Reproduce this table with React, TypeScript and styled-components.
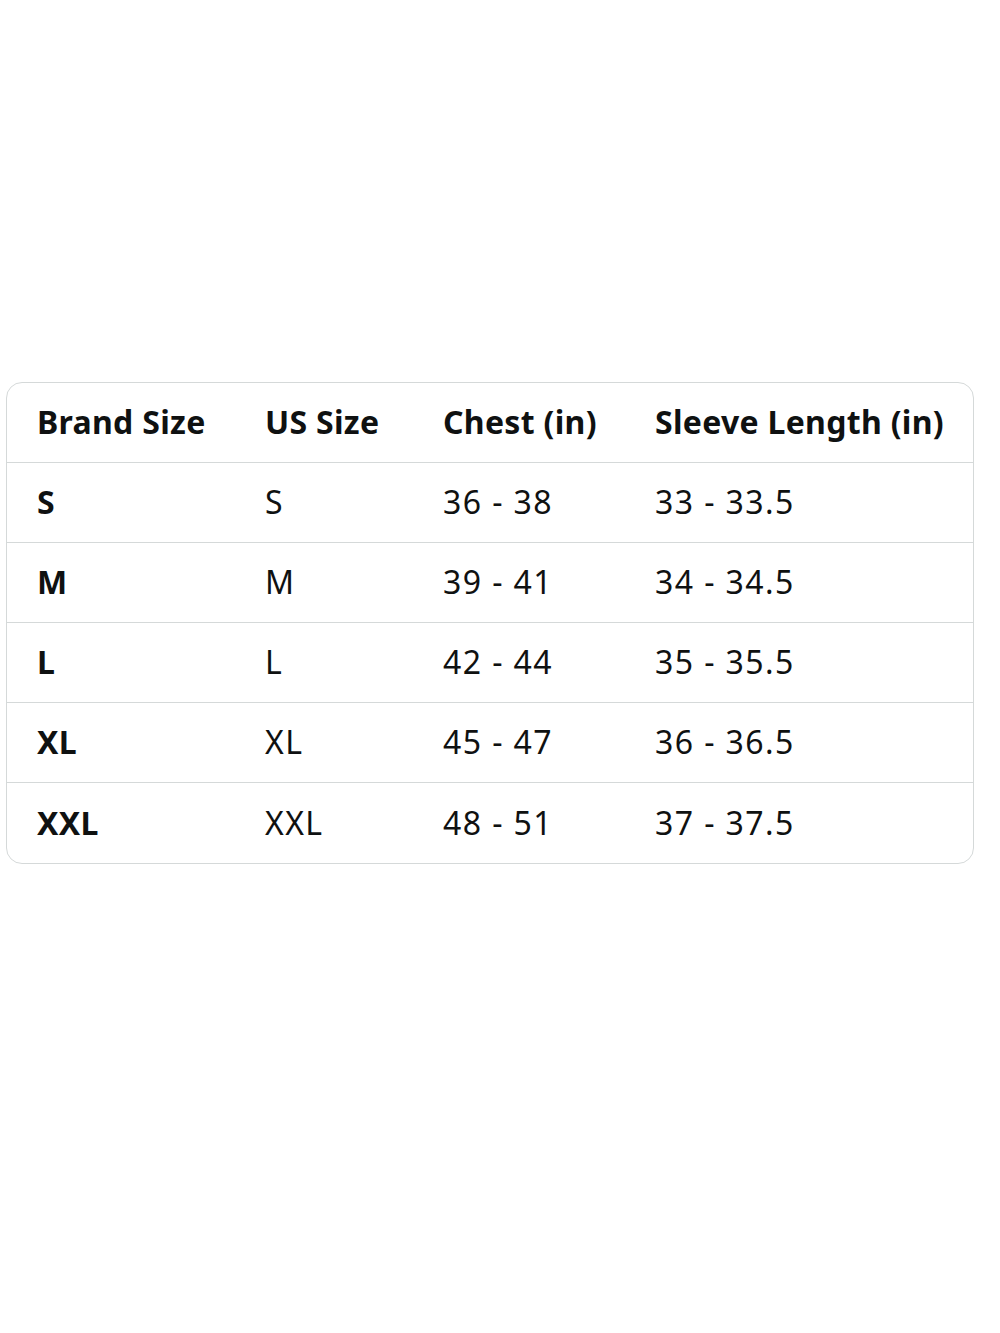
import React from 'react'
import styled, {createGlobalStyle} from 'styled-components'

const GlobalStyle = createGlobalStyle`
    body {
        margin: 0;
        background: #ffffff;
        font-family: "Noto Sans", "Open Sans", Arial, sans-serif;
        color: #0f1111;
    }
`

const Page = styled.div`
    padding: 382px 26px 0 6px;
`

const Card = styled.div`
    border: 1.5px solid #d5d9d9;
    border-radius: 16px;
    overflow: hidden;
`

const Row = styled.div<{$last?: boolean}>`
    display: grid;
    grid-template-columns: 228px 178px 212px 1fr;
    height: 80px;
    align-items: center;
    padding-left: 30px;
    border-bottom: ${p => p.$last ? 'none' : '1.5px solid #d5d9d9'};
    box-sizing: border-box;
`

const Cell = styled.div<{$bold?: boolean}>`
    font-size: 32px;
    font-weight: ${p => p.$bold ? 700 : 400};
    letter-spacing: ${p => p.$bold ? '0.3px' : '1.4px'};
    white-space: nowrap;
    color: #0f1111;
    margin-top: -2px;
`

const sizes = [
    ['S', 'S', '36 - 38', '33 - 33.5'],
    ['M', 'M', '39 - 41', '34 - 34.5'],
    ['L', 'L', '42 - 44', '35 - 35.5'],
    ['XL', 'XL', '45 - 47', '36 - 36.5'],
    ['XXL', 'XXL', '48 - 51', '37 - 37.5'],
]

function App() {
    return (
        <Page>
            <GlobalStyle />
            <Card>
                <Row>
                    <Cell $bold>Brand Size</Cell>
                    <Cell $bold>US Size</Cell>
                    <Cell $bold>Chest (in)</Cell>
                    <Cell $bold>Sleeve Length (in)</Cell>
                </Row>
                {sizes.map((s, i) => (
                    <Row key={s[0]} $last={i === sizes.length - 1}>
                        <Cell $bold>{s[0]}</Cell>
                        <Cell>{s[1]}</Cell>
                        <Cell>{s[2]}</Cell>
                        <Cell>{s[3]}</Cell>
                    </Row>
                ))}
            </Card>
        </Page>
    )
}

export default App
